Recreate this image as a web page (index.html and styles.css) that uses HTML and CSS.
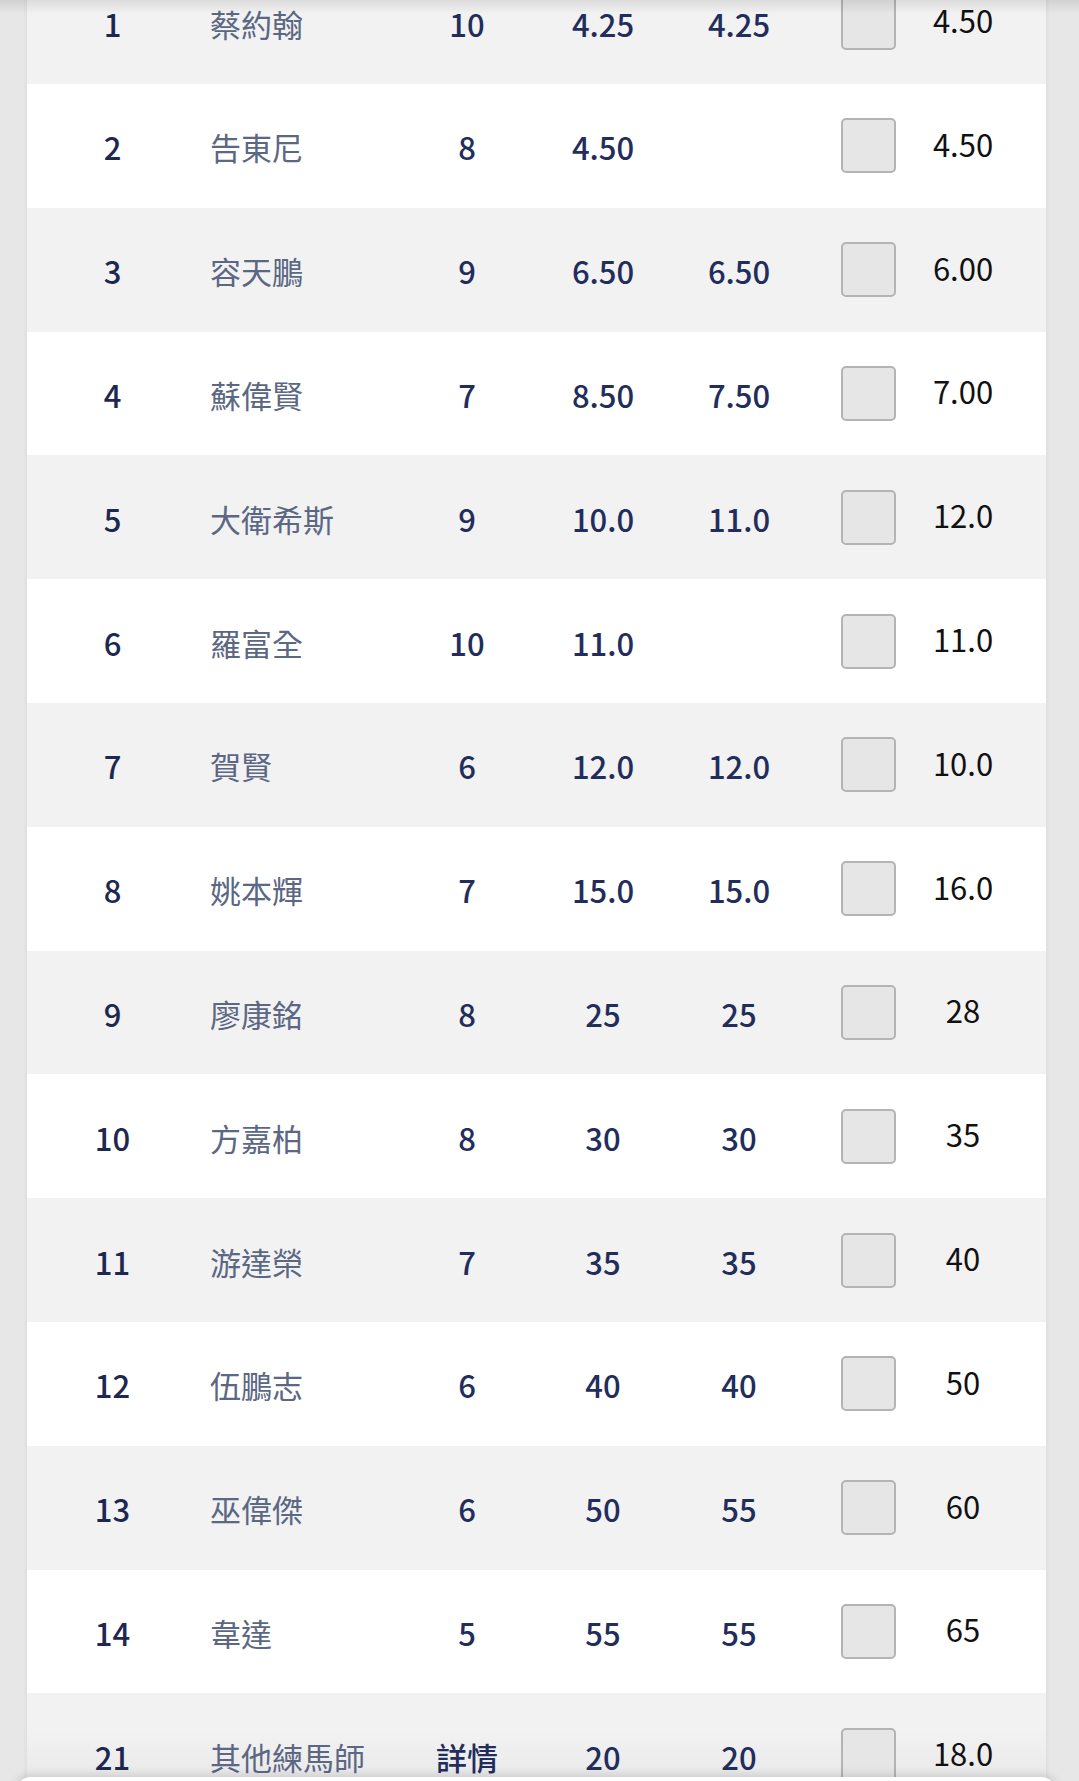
FILE: index.html
```html
<!DOCTYPE html>
<html lang="zh-Hant">

<head>
    <meta charset="UTF-8">
    <meta name="viewport" content="width=device-width, initial-scale=1.0">
    <title>練馬師賠率</title>
    <link rel="stylesheet" href="styles.css">
</head>

<body>
    <div class="top-shade"></div>

    <div class="odds-table">
        <!-- one row per trainer -->
        <div class="odds-row">
            <span class="col-no">1</span><span class="col-name">蔡約翰</span><span class="col-num">10</span>
            <span class="col-odds">4.25</span><span class="col-odds2">4.25</span>
            <span class="col-check"><span class="checkbox"></span></span><span class="col-win">4.50</span>
        </div>
        <div class="odds-row">
            <span class="col-no">2</span><span class="col-name">告東尼</span><span class="col-num">8</span>
            <span class="col-odds">4.50</span><span class="col-odds2"></span>
            <span class="col-check"><span class="checkbox"></span></span><span class="col-win">4.50</span>
        </div>
        <div class="odds-row">
            <span class="col-no">3</span><span class="col-name">容天鵬</span><span class="col-num">9</span>
            <span class="col-odds">6.50</span><span class="col-odds2">6.50</span>
            <span class="col-check"><span class="checkbox"></span></span><span class="col-win">6.00</span>
        </div>
        <div class="odds-row">
            <span class="col-no">4</span><span class="col-name">蘇偉賢</span><span class="col-num">7</span>
            <span class="col-odds">8.50</span><span class="col-odds2">7.50</span>
            <span class="col-check"><span class="checkbox"></span></span><span class="col-win">7.00</span>
        </div>
        <div class="odds-row">
            <span class="col-no">5</span><span class="col-name">大衛希斯</span><span class="col-num">9</span>
            <span class="col-odds">10.0</span><span class="col-odds2">11.0</span>
            <span class="col-check"><span class="checkbox"></span></span><span class="col-win">12.0</span>
        </div>
        <div class="odds-row">
            <span class="col-no">6</span><span class="col-name">羅富全</span><span class="col-num">10</span>
            <span class="col-odds">11.0</span><span class="col-odds2"></span>
            <span class="col-check"><span class="checkbox"></span></span><span class="col-win">11.0</span>
        </div>
        <div class="odds-row">
            <span class="col-no">7</span><span class="col-name">賀賢</span><span class="col-num">6</span>
            <span class="col-odds">12.0</span><span class="col-odds2">12.0</span>
            <span class="col-check"><span class="checkbox"></span></span><span class="col-win">10.0</span>
        </div>
        <div class="odds-row">
            <span class="col-no">8</span><span class="col-name">姚本輝</span><span class="col-num">7</span>
            <span class="col-odds">15.0</span><span class="col-odds2">15.0</span>
            <span class="col-check"><span class="checkbox"></span></span><span class="col-win">16.0</span>
        </div>
        <div class="odds-row">
            <span class="col-no">9</span><span class="col-name">廖康銘</span><span class="col-num">8</span>
            <span class="col-odds">25</span><span class="col-odds2">25</span>
            <span class="col-check"><span class="checkbox"></span></span><span class="col-win">28</span>
        </div>
        <div class="odds-row">
            <span class="col-no">10</span><span class="col-name">方嘉柏</span><span class="col-num">8</span>
            <span class="col-odds">30</span><span class="col-odds2">30</span>
            <span class="col-check"><span class="checkbox"></span></span><span class="col-win">35</span>
        </div>
        <div class="odds-row">
            <span class="col-no">11</span><span class="col-name">游達榮</span><span class="col-num">7</span>
            <span class="col-odds">35</span><span class="col-odds2">35</span>
            <span class="col-check"><span class="checkbox"></span></span><span class="col-win">40</span>
        </div>
        <div class="odds-row">
            <span class="col-no">12</span><span class="col-name">伍鵬志</span><span class="col-num">6</span>
            <span class="col-odds">40</span><span class="col-odds2">40</span>
            <span class="col-check"><span class="checkbox"></span></span><span class="col-win">50</span>
        </div>
        <div class="odds-row">
            <span class="col-no">13</span><span class="col-name">巫偉傑</span><span class="col-num">6</span>
            <span class="col-odds">50</span><span class="col-odds2">55</span>
            <span class="col-check"><span class="checkbox"></span></span><span class="col-win">60</span>
        </div>
        <div class="odds-row">
            <span class="col-no">14</span><span class="col-name">韋達</span><span class="col-num">5</span>
            <span class="col-odds">55</span><span class="col-odds2">55</span>
            <span class="col-check"><span class="checkbox"></span></span><span class="col-win">65</span>
        </div>
        <div class="odds-row">
            <span class="col-no">21</span><span class="col-name">其他練馬師</span><span class="col-num col-link">詳情</span>
            <span class="col-odds">20</span><span class="col-odds2">20</span>
            <span class="col-check"><span class="checkbox"></span></span><span class="col-win">18.0</span>
        </div>
    </div>

    <!-- bottom sheet edge peeking in -->
    <div class="bottom-sheet"></div>
</body>

</html>
```

FILE: styles.css
```css
body {
    margin: 0;
    padding: 0;
    background-color: #e7e7e7;
    font-family: "Noto Sans CJK TC", "Noto Sans", sans-serif;
    overflow: hidden;
}

.top-shade {
    position: fixed;
    top: 0;
    left: 0;
    right: 0;
    height: 14px;
    background: linear-gradient(rgba(0, 0, 0, 0.09), rgba(0, 0, 0, 0));
    z-index: 5;
}

.odds-table {
    margin: -39.8px 33px 0 27px;
    background-color: #fff;
    box-shadow: 0 0 5px rgba(0, 0, 0, 0.07);
}

.odds-row {
    display: grid;
    grid-template-columns: 171px 209px 120px 152px 120px 104px 120px 1fr;
    align-items: center;
    height: 123.8px;
    font-size: 31px;
    line-height: 1;
}

.odds-row:nth-child(odd) {
    background-color: #f2f2f2;
}

.odds-row:last-child {
    /* shadow of the sheet below */
    background: linear-gradient(#f2f2f2 30%, #e3e3e3);
}

.odds-row > span {
    padding-top: 2px;
}

.col-no {
    text-align: center;
    color: #1c2850;
    font-weight: 500;
}

.col-name {
    padding-left: 12px;
    color: #5b6783;
}

.col-num,
.col-odds,
.col-odds2 {
    text-align: center;
    color: #222d5c;
    font-weight: 500;
}

.odds-row > .col-check {
    display: flex;
    justify-content: flex-end;
    padding-top: 0;
    padding-right: 7px;
}

.checkbox {
    display: block;
    width: 51px;
    height: 51px;
    border: 2px solid #b4b4b4;
    border-radius: 5px;
    background-color: #e6e6e6;
}

.odds-row > .col-win {
    text-align: center;
    padding-top: 0;
    padding-bottom: 5px;
    color: #111;
}

.bottom-sheet {
    position: fixed;
    left: 15px;
    right: 22px;
    bottom: -20px;
    height: 24px;
    background-color: #fff;
    border-radius: 16px 16px 0 0;
    box-shadow: 0 -3px 8px rgba(0, 0, 0, 0.12);
    z-index: 6;
}
```
